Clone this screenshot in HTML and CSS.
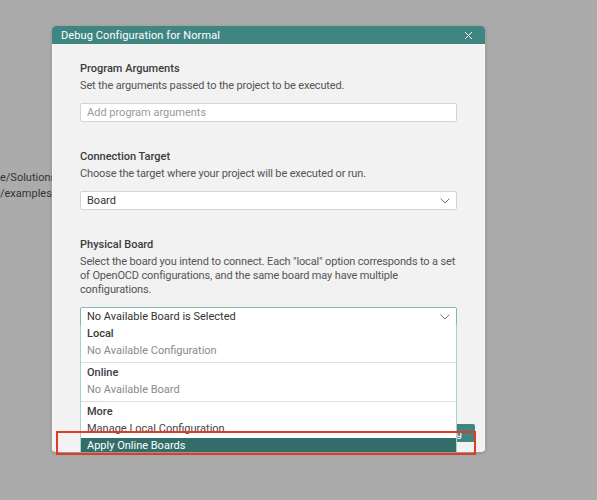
FILE: index.html
```html
<!DOCTYPE html>
<html>
<head>
<meta charset="utf-8">
<link rel="stylesheet" href="styles.css">
</head>
<body>
<div class="page-text">
  <div class="page-line">e/Solutions</div>
  <div class="page-line">/examples/</div>
</div>

<div class="dialog">
  <div class="dialog-header">
    <span class="dialog-title">Debug Configuration for Normal</span>
    <svg class="close" width="9" height="9" viewBox="0 0 9 9"><path d="M1 1L8 8M8 1L1 8" stroke="#fff" stroke-width="1" fill="none"/></svg>
  </div>
  <div class="dialog-body">
    <section class="field">
      <h3 class="field-title">Program Arguments</h3>
      <p class="field-desc">Set the arguments passed to the project to be executed.</p>
      <div class="input placeholder">Add program arguments</div>
    </section>
    <section class="field">
      <h3 class="field-title">Connection Target</h3>
      <p class="field-desc">Choose the target where your project will be executed or run.</p>
      <div class="input select">
        <span>Board</span>
        <svg class="chevron" width="10" height="6" viewBox="0 0 10 6"><path d="M0.5 0.5L5 5L9.5 0.5" stroke="#777" stroke-width="1" fill="none"/></svg>
      </div>
    </section>
    <section class="field">
      <h3 class="field-title">Physical Board</h3>
      <p class="field-desc">Select the board you intend to connect. Each "local" option corresponds to a set of OpenOCD configurations, and the same board may have multiple configurations.</p>
      <div class="select-wrap">
        <div class="input select open">
          <span>No Available Board is Selected</span>
          <svg class="chevron" width="10" height="6" viewBox="0 0 10 6"><path d="M0.5 0.5L5 5L9.5 0.5" stroke="#777" stroke-width="1" fill="none"/></svg>
        </div>
        <div class="menu">
          <div class="group first">
            <div class="group-title">Local</div>
            <div class="group-item">No Available Configuration</div>
          </div>
          <div class="group">
            <div class="group-title">Online</div>
            <div class="group-item">No Available Board</div>
          </div>
          <div class="group last">
            <div class="group-title">More</div>
            <div class="group-item dark">Manage Local Configuration</div>
            <div class="group-item active">Apply Online Boards</div>
          </div>
        </div>
      </div>
    </section>
    <div class="footer">
      <button class="btn">Start Debug</button>
    </div>
  </div>
</div>

<div class="annotation"></div>
</body>
</html>
```

FILE: styles.css
```css
html, body {
  margin: 0;
  padding: 0;
}
body {
  background: #ababab;
  width: 597px;
  height: 500px;
  overflow: hidden;
  font-family: "Roboto", "Noto Sans", sans-serif;
  font-size: 11px;
  color: #333;
  position: relative;
}
.page-text {
  position: absolute;
  left: 0;
  top: 170px;
  color: #333;
  font-size: 11px;
  line-height: 16px;
}

.dialog {
  position: absolute;
  left: 52px;
  top: 26px;
  width: 433px;
  height: 426px;
  border-radius: 4px;
  overflow: hidden;
  background: #f2f2f2;
  box-shadow: 0 1px 4px rgba(0,0,0,0.18);
  display: flex;
  flex-direction: column;
}
.dialog-header {
  height: 18px;
  background: #3f8582;
  color: #fff;
  display: flex;
  align-items: center;
  justify-content: space-between;
  padding: 0 12px 0 9px;
  flex: none;
}
.dialog-title {
  font-size: 11px;
  letter-spacing: 0.1px;
}
.close { display: block; }

.dialog-body {
  flex: 1;
  padding: 18px 27px 0 27px;
  display: flex;
  flex-direction: column;
  border-left: 1px solid #fafafa;
  border-right: 1px solid #fafafa;
  box-sizing: border-box;
  position: relative;
}

.field { margin-bottom: 28px; }
.field-title {
  margin: 0;
  font-size: 11px;
  line-height: 14px;
  font-weight: 500;
  color: #3b3b3b;
}
.field-desc {
  margin: 3px 0 10px;
  font-size: 11px;
  line-height: 14px;
  color: #555;
  letter-spacing: -0.15px;
}
.input {
  box-sizing: border-box;
  height: 19px;
  background: #fff;
  border: 1px solid #d4d4d4;
  border-radius: 2px;
  padding: 0 6px;
  line-height: 17px;
  color: #333;
}
.placeholder { color: #9a9a9a; }
.select {
  display: flex;
  align-items: center;
  justify-content: space-between;
  padding-right: 6px;
}
.chevron { display: block; }
.select.open { border-color: #7fb9b5; }

.select-wrap { position: relative; }
.menu {
  position: absolute;
  left: 0;
  right: 0;
  top: 18px;
  background: #fff;
  border: 1px solid #a9d0cd;
  border-top: none;
  z-index: 2;
}
.group {
  padding: 3px 0 4px;
  border-bottom: 1px solid #dedede;
}
.group.first { padding-top: 2px; }
.group.last { border-bottom: none; padding-bottom: 0; }
.group-title {
  padding: 0 6px;
  line-height: 14px;
  font-weight: 500;
  color: #3b3b3b;
}
.group-item {
  padding: 0 6px;
  line-height: 14px;
  margin-top: 3px;
  color: #8a8a8a;
}
.group-item.dark { color: #444; height: 13px; overflow: hidden; }
.group-item.active {
  margin-top: 3px;
  height: 15px;
  line-height: 15px;
  background: #336d6a;
  color: #fff;
}

.footer {
  margin-top: auto;
  display: flex;
  justify-content: flex-end;
  margin-right: -18px;
  padding-bottom: 10px;
}
.btn {
  height: 18px;
  border: none;
  border-radius: 2px;
  background: #3f8582;
  color: #fff;
  font-family: inherit;
  font-size: 11px;
  padding: 0 13px;
}

.annotation {
  position: absolute;
  left: 56px;
  top: 431px;
  width: 420px;
  height: 24px;
  box-sizing: border-box;
  border: 2px solid #e13a27;
  z-index: 5;
}
```
